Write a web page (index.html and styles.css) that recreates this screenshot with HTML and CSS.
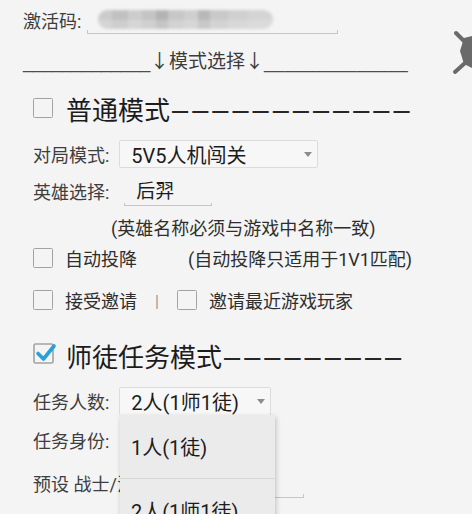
FILE: index.html
```html
<!DOCTYPE html>
<html lang="zh">
<head>
<meta charset="utf-8">
<title>模式选择</title>
<link rel="stylesheet" href="styles.css">
</head>
<body>
<div class="screen">
  <div class="code-row">
    <span class="label">激活码:</span>
    <div class="edit code-edit">
      <div class="val"><div class="blur"></div></div>
      <div class="line"></div>
    </div>
  </div>

  <div class="divider-row"><span class="rule rule-left">_____________</span><span class="divider-text">↓模式选择↓</span><span class="rule rule-right">______________</span></div>

  <div class="section">
    <div class="row title-row r-normal">
      <span class="cb"></span>
      <span class="title">普通模式</span><span class="dashes">––––––––––––</span>
    </div>

    <div class="row r-match">
      <span class="label">对局模式:</span>
      <div class="spinner sp-wide"><span>5V5人机闯关</span><span class="arrow"></span></div>
    </div>

    <div class="row r-hero">
      <span class="label">英雄选择:</span>
      <div class="edit hero-edit">
        <div class="val"><span class="val-text">后羿</span></div>
        <div class="line"></div>
      </div>
    </div>

    <div class="row r-note">
      <span class="note">(英雄名称必须与游戏中名称一致)</span>
    </div>

    <div class="row r-surrender">
      <span class="cb"></span>
      <span class="opt">自动投降</span>
      <span class="opt note-gap">(自动投降只适用于1V1匹配)</span>
    </div>

    <div class="row r-invite">
      <span class="cb"></span>
      <span class="opt">接受邀请</span>
      <span class="sep">|</span>
      <span class="cb"></span>
      <span class="opt">邀请最近游戏玩家</span>
    </div>

    <div class="row title-row r-master">
      <svg class="cb-checked" width="24" height="26" viewBox="0 0 24 26">
        <rect x="1" y="5" width="19" height="19" rx="1.5" fill="none" stroke="#a3a3a3" stroke-width="1.6"/>
        <path d="M5 14.5 L10.5 20 L21 7" fill="none" stroke="#2b9fd9" stroke-width="3.6" stroke-linecap="round" stroke-linejoin="round"/>
      </svg>
      <span class="title">师徒任务模式</span><span class="dashes">–––––––––</span>
    </div>

    <div class="row r-count">
      <span class="label">任务人数:</span>
      <div class="spinner sp-narrow"><span>2人(1师1徒)</span><span class="arrow"></span></div>
    </div>

    <div class="row r-role">
      <span class="label">任务身份:</span>
    </div>

    <div class="row r-preset">
      <span class="label">预设 战士/法师:</span>
      <div class="edit preset-edit">
        <div class="val"></div>
        <div class="line"></div>
      </div>
    </div>
  </div>

  <div class="popup">
    <div class="popup-item sep-below">1人(1徒)</div>
    <div class="popup-item">2人(1师1徒)</div>
  </div>

  <svg class="float-icon" width="20" height="50" viewBox="0 0 20 50">
    <path d="M4 5 L14 15" stroke="#6a6a6a" stroke-width="4" stroke-linecap="round"/>
    <path d="M3 44 L13 35" stroke="#6a6a6a" stroke-width="4" stroke-linecap="round"/>
    <path d="M12 10 L20 8 L20 40 L12 36 L8 23 Z" fill="#6a6a6a"/>
  </svg>
</div>
</body>
</html>
```

FILE: styles.css
```css
html, body {
  margin: 0;
  padding: 0;
  background: #f4f4f4;
}

body {
  font-family: Roboto, "Noto Sans CJK SC", sans-serif;
  color: #3c3c3c;
}

.screen {
  position: relative;
  width: 472px;
  height: 514px;
  overflow: hidden;
  background: #f4f4f4;
}

.label {
  font-size: 18px;
  color: #3e3e3e;
  white-space: nowrap;
}

/* activation code row */
.code-row {
  display: flex;
  align-items: center;
  height: 40px;
  padding-left: 23px;
}

.edit {
  display: flex;
  flex-direction: column;
  box-sizing: border-box;
}

.edit .val {
  flex: 1;
  display: flex;
  align-items: center;
}

.edit .line {
  height: 3px;
  border: 1px solid #c6c6c6;
  border-top: 0;
}

.code-edit {
  align-self: flex-start;
  margin-top: 8px;
  margin-left: 6px;
  width: 251px;
  height: 26px;
}

.blur {
  margin-left: 11px;
  width: 175px;
  height: 19px;
  border-radius: 10px;
  background:
    linear-gradient(180deg, rgba(255,255,255,0) 0, rgba(255,255,255,0) 10px, rgba(230,230,230,0.35) 10px, rgba(230,230,230,0.35) 19px),
    linear-gradient(90deg,
      #cbcbcb 0, #cbcbcb 14px, #c1c1c1 14px, #c1c1c1 30px, #cdcdcd 30px, #cdcdcd 44px,
      #c4c4c4 44px, #c4c4c4 58px, #b3b3b3 58px, #b3b3b3 70px, #c7c7c7 70px, #c7c7c7 86px,
      #cfcfcf 86px, #cfcfcf 100px, #b8b8b8 100px, #b8b8b8 112px, #c9c9c9 112px, #c9c9c9 130px,
      #d0d0d0 130px, #d0d0d0 150px, #d4d4d4 150px);
  filter: blur(1.4px);
}

/* divider */
.divider-row {
  height: 40px;
  padding-left: 23px;
  line-height: 40px;
  white-space: nowrap;
}

.rule {
  font-family: "Liberation Sans", sans-serif;
  font-size: 18px;
  color: #4e4e4e;
}

.rule-left { letter-spacing: -0.24px; }
.rule-right { letter-spacing: 0.28px; }

.divider-text {
  font-family: "Noto Sans CJK SC", sans-serif;
  font-size: 19px;
  color: #3c3c3c;
}

/* main section */
.section {
  padding-left: 33px;
}

.row {
  display: flex;
  align-items: center;
  white-space: nowrap;
}

.cb {
  width: 20px;
  height: 20px;
  box-sizing: border-box;
  border: 1.6px solid #a3a3a3;
  border-radius: 1.5px;
  flex: none;
}

.title-row .cb {
  margin-right: 13px;
}

.title {
  font-family: "Noto Sans CJK SC", sans-serif;
  font-size: 26px;
  color: #1c1c1c;
}

.dashes {
  font-family: "Liberation Sans", sans-serif;
  font-size: 29px;
  letter-spacing: 4px;
  color: #262626;
  margin-left: 2px;
  position: relative;
  top: 2px;
}

.r-normal {
  margin-top: 8px;
  height: 40px;
}

.r-match {
  margin-top: 10px;
  height: 32px;
}

.spinner {
  display: flex;
  align-items: center;
  justify-content: space-between;
  box-sizing: border-box;
  margin-left: 10px;
  border: 1px solid #dcdcdc;
  border-radius: 2px;
  background: #f7f7f7;
  font-size: 20px;
  color: #1c1c1c;
  padding: 0 5px 0 11px;
}

.sp-wide {
  width: 199px;
  height: 28px;
}

.sp-narrow {
  width: 152px;
  height: 29px;
}

.arrow {
  width: 0;
  height: 0;
  border-left: 4.5px solid transparent;
  border-right: 4.5px solid transparent;
  border-top: 5px solid #8c8c8c;
}

.r-hero {
  margin-top: 6px;
  height: 30px;
}

.hero-edit {
  align-self: stretch;
  margin-left: 15px;
  width: 88px;
}

.val-text {
  padding-left: 12px;
  font-size: 19px;
  color: #1c1c1c;
}

.r-note {
  margin-top: 8px;
  height: 26px;
}

.note {
  margin-left: 78px;
  font-size: 18px;
  color: #2e2e2e;
}

.opt {
  font-size: 18px;
  color: #2e2e2e;
}

.r-surrender {
  margin-top: 3px;
  height: 30px;
}

.r-surrender .cb,
.r-invite .cb {
  margin-right: 12px;
}

.note-gap {
  margin-left: 51px;
}

.r-invite {
  margin-top: 12px;
  height: 30px;
}

.sep {
  font-family: "Liberation Sans", sans-serif;
  font-size: 15px;
  color: #9a9a9a;
  margin: 0 18px 0 18px;
}

.r-master {
  margin-top: 22px;
  height: 36px;
}

.cb-checked {
  flex: none;
  margin-right: 9px;
  margin-top: -6px;
}

.r-count {
  margin-top: 13px;
  height: 30px;
}

.r-role {
  margin-top: 9px;
  height: 30px;
}

.r-preset {
  margin-top: 13px;
  height: 30px;
}

.preset-edit {
  align-self: stretch;
  margin-left: 8px;
  width: 139px;
}

/* dropdown popup */
.popup {
  position: absolute;
  left: 120px;
  top: 415px;
  width: 155px;
  height: 140px;
  background: #ebebeb;
  box-shadow: 1px 2px 5px rgba(0, 0, 0, 0.22);
}

.popup-item {
  height: 63px;
  display: flex;
  align-items: center;
  padding-left: 11px;
  font-size: 20px;
  color: #1c1c1c;
  white-space: nowrap;
}

.sep-below {
  border-bottom: 1px solid #d7d7d7;
}

.float-icon {
  position: absolute;
  left: 452px;
  top: 28px;
}
```
